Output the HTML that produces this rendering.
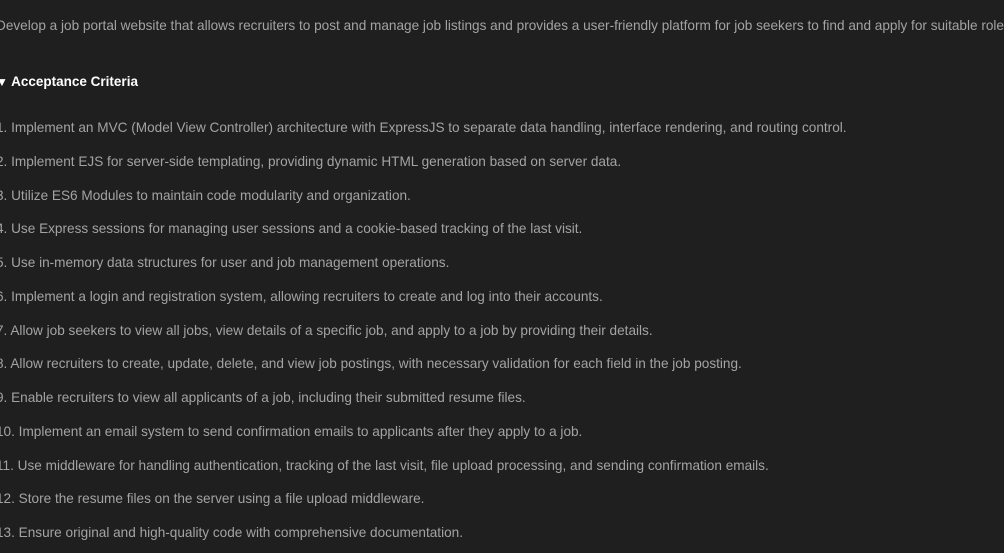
<!DOCTYPE html>
<html><head><meta charset="utf-8"><style>
html,body{margin:0;padding:0;background:#1f1f1f;width:1004px;height:553px;overflow:hidden}
body{font-family:"Liberation Sans",sans-serif;font-size:13.6px;color:#a3a3a3;position:relative}
.l{position:absolute;left:-4px;white-space:nowrap;line-height:20px}
.h{color:#fff;font-weight:bold;font-size:13.5px}
</style></head><body>
<div class="l" style="top:16px">Develop a job portal website that allows recruiters to post and manage job listings and provides a user-friendly platform for job seekers to find and apply for suitable roles.</div>
<div class="l h" style="top:72px"><span style="font-size:12px">▼</span> Acceptance Criteria</div>
<div class="l" style="top:118px">1. Implement an MVC (Model View Controller) architecture with ExpressJS to separate data handling, interface rendering, and routing control.</div>
<div class="l" style="top:152px">2. Implement EJS for server-side templating, providing dynamic HTML generation based on server data.</div>
<div class="l" style="top:186px">3. Utilize ES6 Modules to maintain code modularity and organization.</div>
<div class="l" style="top:219px">4. Use Express sessions for managing user sessions and a cookie-based tracking of the last visit.</div>
<div class="l" style="top:253px">5. Use in-memory data structures for user and job management operations.</div>
<div class="l" style="top:287px">6. Implement a login and registration system, allowing recruiters to create and log into their accounts.</div>
<div class="l" style="top:321px">7. Allow job seekers to view all jobs, view details of a specific job, and apply to a job by providing their details.</div>
<div class="l" style="top:354px">8. Allow recruiters to create, update, delete, and view job postings, with necessary validation for each field in the job posting.</div>
<div class="l" style="top:388px">9. Enable recruiters to view all applicants of a job, including their submitted resume files.</div>
<div class="l" style="top:422px">10. Implement an email system to send confirmation emails to applicants after they apply to a job.</div>
<div class="l" style="top:456px">11. Use middleware for handling authentication, tracking of the last visit, file upload processing, and sending confirmation emails.</div>
<div class="l" style="top:489px">12. Store the resume files on the server using a file upload middleware.</div>
<div class="l" style="top:523px">13. Ensure original and high-quality code with comprehensive documentation.</div>
</body></html>
